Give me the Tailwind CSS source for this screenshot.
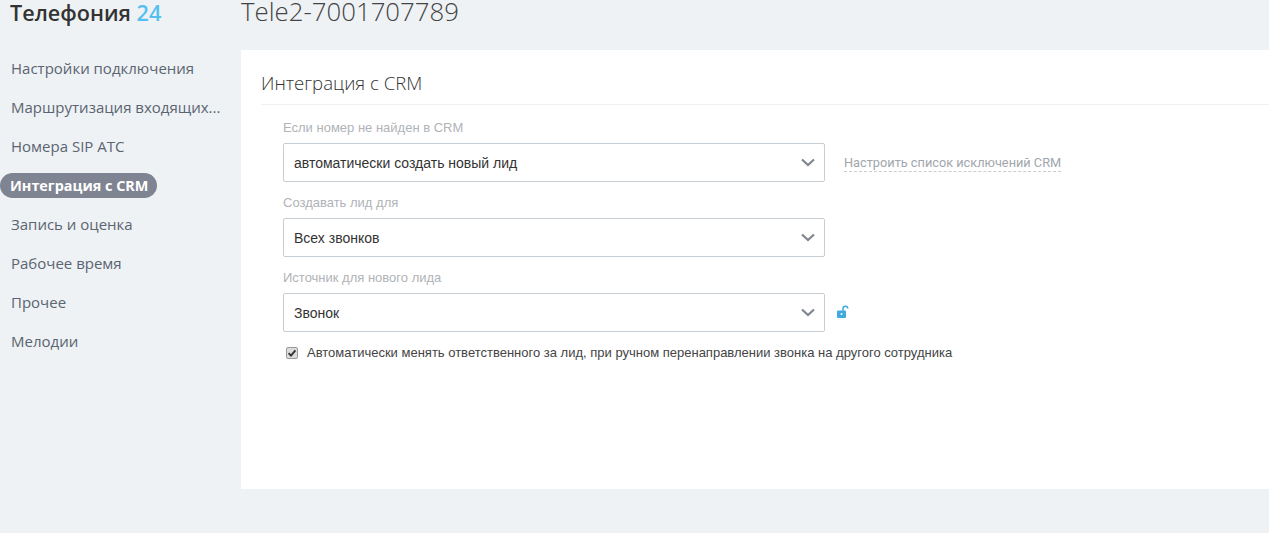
<!DOCTYPE html>
<html lang="ru">
<head>
    <meta charset="UTF-8">
    <title>Телефония 24</title>
    <script src="https://cdn.jsdelivr.net/npm/@tailwindcss/browser@4"></script>
</head>
<body class="bg-[#eef2f4] h-[533px] w-[1269px] overflow-hidden font-['Open_Sans',sans-serif]">
<div class="flex h-full">
    <!-- sidebar -->
    <div class="w-[241px] shrink-0">
        <div class="pl-[10px] h-[50px] text-[21.6px] leading-[25px] font-semibold text-[#333] whitespace-nowrap">Телефония <span class="text-[#55c0f0]">24</span></div>
        <ul class="text-[#5b6472] text-[15px] leading-[20px] mt-[8px]">
            <li class="pl-[11px] h-[39px] whitespace-nowrap">Настройки подключения</li>
            <li class="pl-[11px] h-[39px] whitespace-nowrap">Маршрутизация входящих...</li>
            <li class="pl-[11px] h-[39px] whitespace-nowrap">Номера SIP ATC</li>
            <li class="h-[39px]"><span class="inline-block h-[25px] -mt-[3px] pl-[10px] pr-[9px] rounded-full bg-[#7f8493] text-white font-bold text-[14.4px] leading-[25px] whitespace-nowrap">Интеграция с CRM</span></li>
            <li class="pl-[11px] h-[39px] whitespace-nowrap">Запись и оценка</li>
            <li class="pl-[11px] h-[39px] whitespace-nowrap">Рабочее время</li>
            <li class="pl-[11px] h-[39px] whitespace-nowrap">Прочее</li>
            <li class="pl-[11px] h-[39px] whitespace-nowrap">Мелодии</li>
        </ul>
    </div>

    <!-- main -->
    <div class="flex-1 min-w-0">
        <div class="h-[50px] text-[25.8px] leading-[23px] font-light text-[#444] whitespace-nowrap">Tele2-7001707789</div>
        <div class="bg-white h-[439px] pl-[20px] pt-[21px]">
            <div class="h-[34px] border-b border-[#eef2f4] text-[18.6px] leading-[24px] font-light text-[#333]">Интеграция с CRM</div>

            <div class="pl-[22px] font-['Liberation_Sans',sans-serif]">
                <div class="text-[13px] leading-[16px] text-[#b0b3b7] pt-[15px] h-[38px]">Если номер не найден в CRM</div>
                <div class="flex items-center">
                    <div class="w-[542px] h-[39px] border border-[#c6cdd3] rounded-[2px] pl-[10px] pr-[9px] pt-[1px] flex items-center justify-between text-[14px] text-[#333]">
                        автоматически создать новый лид
                        <svg class="-mt-[1px]" width="14" height="9" viewBox="0 0 14 9" fill="none" stroke="#80868e" stroke-width="2.2"><path d="M1 1.5l6 5.5 6-5.5"/></svg>
                    </div>
                    <span class="ml-[19px] text-[12.75px] leading-[17px] text-[#a1a6ac] border-b border-dashed border-[#c6cdd3] font-['Roboto',sans-serif]">Настроить список исключений CRM</span>
                </div>

                <div class="text-[13px] leading-[16px] text-[#b0b3b7] pt-[13px] h-[36px]">Создавать лид для</div>
                <div class="w-[542px] h-[39px] border border-[#c6cdd3] rounded-[2px] pl-[10px] pr-[9px] pt-[1px] flex items-center justify-between text-[14px] text-[#333]">
                    Всех звонков
                    <svg class="-mt-[1px]" width="14" height="9" viewBox="0 0 14 9" fill="none" stroke="#80868e" stroke-width="2.2"><path d="M1 1.5l6 5.5 6-5.5"/></svg>
                </div>

                <div class="text-[13px] leading-[16px] text-[#b0b3b7] pt-[13px] h-[36px]">Источник для нового лида</div>
                <div class="flex items-center">
                    <div class="w-[542px] h-[39px] border border-[#c6cdd3] rounded-[2px] pl-[10px] pr-[9px] pt-[1px] flex items-center justify-between text-[14px] text-[#333]">
                        Звонок
                        <svg class="-mt-[1px]" width="14" height="9" viewBox="0 0 14 9" fill="none" stroke="#80868e" stroke-width="2.2"><path d="M1 1.5l6 5.5 6-5.5"/></svg>
                    </div>
                    <svg class="ml-[11px] -mt-[1px]" width="14" height="14" viewBox="0 0 14 14" fill="none">
                        <path d="M7 6V3.6C7 2.2 8 1.2 9.4 1.2s2.4 1 2.4 2.4" stroke="#3fa9e0" stroke-width="1.5"/>
                        <rect x="1" y="5.5" width="9" height="7.5" rx="1" fill="#3fa9e0"/>
                        <circle cx="5.5" cy="9" r="1" fill="#fff"/>
                    </svg>
                </div>

                <div class="flex items-center mt-[13px] pl-[3px]">
                    <div class="w-[12px] h-[12px] rounded-[2px] bg-[#dcdcdc] border border-[#9a9a9a] flex items-center justify-center">
                        <svg width="10" height="10" viewBox="0 0 10 10" fill="none" stroke="#333" stroke-width="1.9"><path d="M1.6 5.2l2.4 2.4 4.4-5.2"/></svg>
                    </div>
                    <span class="ml-[9px] text-[13px] leading-[16px] text-[#444]">Автоматически менять ответственного за лид, при ручном перенаправлении звонка на другого сотрудника</span>
                </div>
            </div>
        </div>
    </div>
</div>
</body>
</html>
